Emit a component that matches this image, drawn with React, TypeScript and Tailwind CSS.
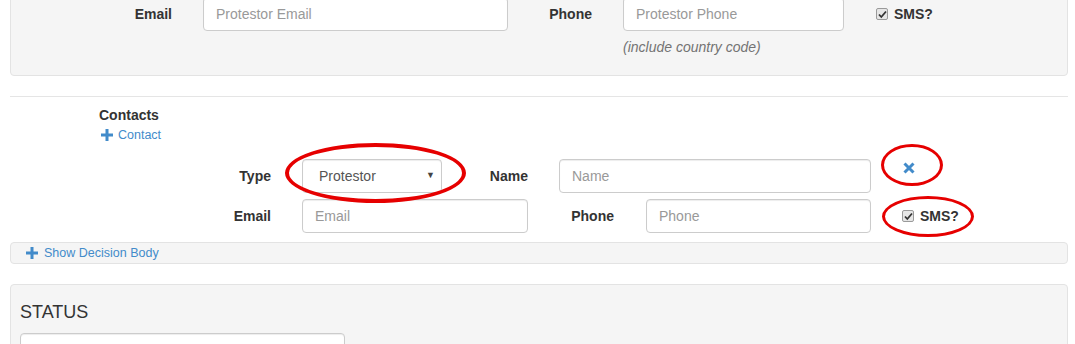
import React from 'react';

const inputCls =
  'h-[34px] rounded-[4px] border border-[#cccccc] bg-white px-[12px] text-[14px] text-[#555] placeholder:text-[#999] shadow-[inset_0_1px_1px_rgba(0,0,0,0.075)] outline-none';

function Plus() {
  return (
    <svg width="12" height="12" viewBox="0 0 12 12" className="shrink-0">
      <path d="M4.5 0h3v4.5H12v3H7.5V12h-3V7.5H0v-3h4.5z" fill="#428bca" />
    </svg>
  );
}

function Remove() {
  return (
    <svg width="12" height="12" viewBox="0 0 12 12" className="shrink-0">
      <path d="M1.5 1.5l9 9M10.5 1.5l-9 9" stroke="#428bca" strokeWidth="3" />
    </svg>
  );
}

function Check() {
  return (
    <span className="flex h-[12px] w-[12px] items-center justify-center rounded-[2px] border border-[#9a9a9a] bg-[#e6e6e6]">
      <svg width="9" height="9" viewBox="0 0 9 9">
        <path d="M1 4.5l2.3 2.5L8 1.5" stroke="#333" strokeWidth="1.8" fill="none" />
      </svg>
    </span>
  );
}

function Sms({ gap }: { gap: string }) {
  return (
    <label className="flex items-center">
      <Check />
      <span className={`${gap} text-[14px] font-bold text-[#333]`}>SMS?</span>
    </label>
  );
}

function Label({ text, w }: { text: string; w: string }) {
  return <div className={`${w} shrink-0 text-right text-[14px] font-bold text-[#333]`}>{text}</div>;
}

export default function App() {
  return (
    <div className="relative flex flex-col bg-white font-['Liberation_Sans',Arial,sans-serif] text-[#333]">
      {/* protestor panel, top cut off */}
      <div className="ml-[10px] mr-[7px] -mt-[21px] rounded-[4px] border border-[#e3e3e3] bg-[#f5f5f5] pt-[17px] pb-[18px]">
        <div className="flex h-[34px] items-center">
          <Label text="Email" w="w-[161px]" />
          <input className={`${inputCls} ml-[31px] w-[305px]`} placeholder="Protestor Email" />
          <Label text="Phone" w="w-[84px]" />
          <input className={`${inputCls} ml-[31px] w-[221px]`} placeholder="Protestor Phone" />
          <div className="ml-[32px]">
            <Sms gap="ml-[6px]" />
          </div>
        </div>
        <div className="ml-[612px] mt-[6px] text-[14px] leading-[20px] italic text-[#737373]">
          (include country code)
        </div>
      </div>

      <div className="ml-[10px] mr-[7px] mt-[20px] border-t border-[#e5e5e5]" />

      {/* contacts */}
      <div className="ml-[99px] mt-[8px] text-[14px] leading-[20px] font-bold">Contacts</div>
      <div className="ml-[101px] flex h-[20px] items-center gap-[5px] text-[12.5px] text-[#428bca]">
        <Plus />
        <span>Contact</span>
      </div>

      <div className="ml-[10px] mt-[14px] flex h-[34px] items-center">
        <Label text="Type" w="w-[261px]" />
        <div className="ml-[31px] flex h-[34px] w-[140px] items-center justify-between rounded-[4px] border border-[#cccccc] bg-white pl-[16px] pr-[6px] text-[14px] text-[#555] shadow-[inset_0_1px_1px_rgba(0,0,0,0.075)]">
          <span>Protestor</span>
          <span className="text-[9px] text-[#444]">▼</span>
        </div>
        <Label text="Name" w="w-[86px]" />
        <input className={`${inputCls} ml-[31px] w-[312px]`} placeholder="Name" />
        <div className="ml-[32px] -mt-[16px]">
          <Remove />
        </div>
      </div>

      <div className="ml-[10px] mt-[6px] flex h-[34px] items-center">
        <Label text="Email" w="w-[261px]" />
        <input className={`${inputCls} ml-[31px] w-[226px]`} placeholder="Email" />
        <Label text="Phone" w="w-[86px]" />
        <input className={`${inputCls} ml-[32px] w-[225px]`} placeholder="Phone" />
        <div className="ml-[31px]">
          <Sms gap="ml-[6px]" />
        </div>
      </div>

      {/* decision body toggle */}
      <div className="ml-[10px] mr-[7px] mt-[9px] flex h-[22px] items-center gap-[6px] rounded-[4px] border border-[#e3e3e3] bg-[#f5f5f5] pl-[15px] text-[12.5px] text-[#428bca]">
        <Plus />
        <span>Show Decision Body</span>
      </div>

      {/* status */}
      <div className="ml-[10px] mr-[7px] mt-[20px] h-[120px] rounded-[4px] border border-[#e3e3e3] bg-[#f5f5f5] pl-[9px] pt-[17px]">
        <div className="text-[18px] leading-[20px] text-[#333]">STATUS</div>
        <div className="mt-[11px] h-[34px] w-[325px] rounded-[4px] border border-[#cccccc] bg-white shadow-[inset_0_1px_1px_rgba(0,0,0,0.075)]" />
      </div>

      {/* red annotation rings */}
      <div className="pointer-events-none absolute left-[285px] top-[143px] h-[60px] w-[181px] rounded-[50%] border-[4px] border-[#e60000]" />
      <div className="pointer-events-none absolute left-[881px] top-[144px] h-[42px] w-[62px] rounded-[50%] border-[3px] border-[#e60000]" />
      <div className="pointer-events-none absolute left-[882px] top-[196px] h-[41px] w-[92px] rounded-[50%] border-[3px] border-[#e60000]" />
    </div>
  );
}
